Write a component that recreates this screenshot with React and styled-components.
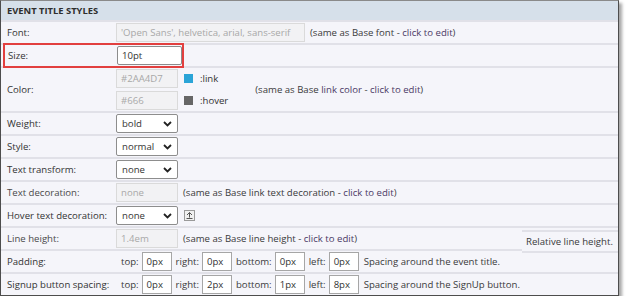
import React from "react";
import styled, { createGlobalStyle } from "styled-components";

const GlobalStyle = createGlobalStyle`
  html, body {
    margin: 0;
    padding: 0;
    background: #ffffff;
  }
  body {
    font-family: "Open Sans", "DejaVu Sans", sans-serif;
    font-size: 9.6px;
    color: #3a3a3a;
  }
`;

export default function App() {
  return (
    <>
      <GlobalStyle />
      <Panel>
        <Header>EVENT TITLE STYLES</Header>

        <Row>
          <Label>Font:</Label>
          <Field disabled width="189px">'Open Sans', helvetica, arial, sans-serif</Field>
          <Note>
            (same as Base font - <Link>click to edit</Link>)
          </Note>
        </Row>

        <Row>
          <Highlight>
            <Label inner>Size:</Label>
            <Field width="65px" active>
              10pt
            </Field>
          </Highlight>
        </Row>

        <Row>
          <Label>Color:</Label>
          <ColorStack>
            <ColorLine>
              <Field disabled>#2AA4D7</Field>
              <Swatch color="#2aa4d7" />
              <span>:link</span>
            </ColorLine>
            <ColorLine>
              <Field disabled>#666</Field>
              <Swatch color="#666666" />
              <span>:hover</span>
            </ColorLine>
          </ColorStack>
          <Note offset="27px">
            (same as Base <Link>link color</Link> - <Link>click to edit</Link>)
          </Note>
        </Row>

        <Row>
          <Label>Weight:</Label>
          <Select>bold</Select>
        </Row>
        <Row>
          <Label>Style:</Label>
          <Select>normal</Select>
        </Row>
        <Row>
          <Label>Text transform:</Label>
          <Select>none</Select>
        </Row>

        <Row>
          <Label muted>Text decoration:</Label>
          <Field disabled>none</Field>
          <Note>
            (same as Base link text decoration - <Link>click to edit</Link>)
          </Note>
        </Row>

        <Row>
          <Label>Hover text decoration:</Label>
          <Select>none</Select>
          <IconBox>
            <svg width="9" height="9" viewBox="0 0 9 9">
              <path d="M4.5 1.5 L2 4 M4.5 1.5 L7 4 M4.5 1.5 V6.5 M1.5 7.5 H7.5" stroke="#555" strokeWidth="1" fill="none" />
            </svg>
          </IconBox>
        </Row>

        <Row split>
          <SplitMain>
            <Label muted>Line height:</Label>
            <Field disabled>1.4em</Field>
            <Note>
              (same as Base line height - <Link>click to edit</Link>)
            </Note>
          </SplitMain>
          <SideNote>Relative line height.</SideNote>
        </Row>

        <Row>
          <Label>Padding:</Label>
          <Boxes>
            <Small>top:</Small>
            <Field width="30px" white>0px</Field>
            <Small>right:</Small>
            <Field width="30px" white>0px</Field>
            <Small>bottom:</Small>
            <Field width="30px" white>0px</Field>
            <Small>left:</Small>
            <Field width="30px" white>0px</Field>
          </Boxes>
          <Note>Spacing around the event title.</Note>
        </Row>

        <Row>
          <Label>Signup button spacing:</Label>
          <Boxes>
            <Small>top:</Small>
            <Field width="30px" white>0px</Field>
            <Small>right:</Small>
            <Field width="30px" white>2px</Field>
            <Small>bottom:</Small>
            <Field width="30px" white>1px</Field>
            <Small>left:</Small>
            <Field width="30px" white>8px</Field>
          </Boxes>
          <Note>Spacing around the SignUp button.</Note>
        </Row>
      </Panel>
    </>
  );
}

function Select({ children }) {
  return (
    <SelectBox>
      <span>{children}</span>
      <svg width="9" height="6" viewBox="0 0 9 6">
        <path d="M1 1 L4.5 4.5 L8 1" stroke="#222" strokeWidth="1.8" fill="none" />
      </svg>
    </SelectBox>
  );
}

const Panel = styled.div`
  width: 617px;
  border: 1px solid #4d4d4d;
  border-top-color: #8a8a8a;
  background: #f5f5fa;
  box-shadow: 3px 3px 3px rgba(0, 0, 0, 0.35);
`;

const Header = styled.div`
  display: flex;
  align-items: center;
  height: 19px;
  padding-left: 6px;
  background: #d6e0ea;
  font-weight: 700;
  font-size: 9.4px;
  color: #2e2e2e;
`;

const Row = styled.div`
  display: flex;
  align-items: ${(p) => (p.split ? "stretch" : "center")};
  min-height: 21px;
  border-top: 2px solid #e1e1e8;
  background: #f5f5fa;
`;

const SplitMain = styled.div`
  display: flex;
  align-items: center;
  border-bottom: 2px solid #e1e1e8;
  margin-bottom: -2px;
  padding-right: 6px;
`;

const SideNote = styled.div`
  display: flex;
  align-items: center;
  margin-left: auto;
  margin-top: 2px;
  margin-bottom: -4px;
  padding: 0 4px;
  width: 88px;
  border-top: 2px solid #e1e1e8;
  border-bottom: 2px solid #e1e1e8;
  background: #f5f5fa;
  position: relative;
  z-index: 1;
  white-space: nowrap;
`;

const Label = styled.div`
  width: ${(p) => (p.inner ? "109px" : "109px")};
  padding-left: ${(p) => (p.inner ? "3px" : "6px")};
  flex-shrink: 0;
  white-space: nowrap;
  color: ${(p) => (p.muted ? "#4a4a4a" : "#333333")};
`;

const Highlight = styled.div`
  display: flex;
  align-items: center;
  margin: -3px 0 -2px 2px;
  width: 177px;
  height: 21px;
  border: 2px solid #e2403f;
`;

const Field = styled.div`
  display: flex;
  align-items: center;
  box-sizing: border-box;
  width: ${(p) => p.width || "62px"};
  height: 19px;
  padding: 0 4px;
  flex-shrink: 0;
  white-space: nowrap;
  overflow: hidden;
  border: 1px solid ${(p) => (p.active ? "#8c8c8c" : p.white ? "#a6a6a6" : "#dadada")};
  background: ${(p) => (p.disabled ? "#f2f2f4" : "#ffffff")};
  color: ${(p) => (p.disabled ? "#a8a8a8" : "#333333")};
  border-radius: ${(p) => (p.active ? "2px" : "0")};
`;

const Note = styled.div`
  margin-left: ${(p) => (p.offset ? p.offset : "5px")};
  white-space: nowrap;
  color: #3a3a3a;
`;

const Link = styled.span`
  color: #4b3a66;
`;

const ColorStack = styled.div`
  display: flex;
  flex-direction: column;
  gap: 3px;
  padding: 1px 0;
`;

const ColorLine = styled.div`
  display: flex;
  align-items: center;
  height: 19px;
  & > span {
    color: #333;
  }
`;

const Swatch = styled.div`
  width: 9px;
  height: 9px;
  margin: 0 7px 0 6px;
  background: ${(p) => p.color};
`;

const SelectBox = styled.div`
  display: flex;
  align-items: center;
  justify-content: space-between;
  box-sizing: border-box;
  width: 62px;
  height: 19px;
  padding: 0 5px 0 5px;
  border: 1px solid #8d8d8d;
  border-radius: 2px;
  background: #ffffff;
  color: #333;
`;

const IconBox = styled.div`
  display: flex;
  align-items: center;
  justify-content: center;
  box-sizing: border-box;
  width: 11px;
  height: 11px;
  margin-left: 6px;
  border: 1px solid #9a9a9a;
  background: #f0f0f0;
`;

const Boxes = styled.div`
  display: flex;
  align-items: center;
  gap: 3px;
  padding-left: 4px;
`;

const Small = styled.span`
  margin-left: 1px;
  color: #3a3a3a;
`;
